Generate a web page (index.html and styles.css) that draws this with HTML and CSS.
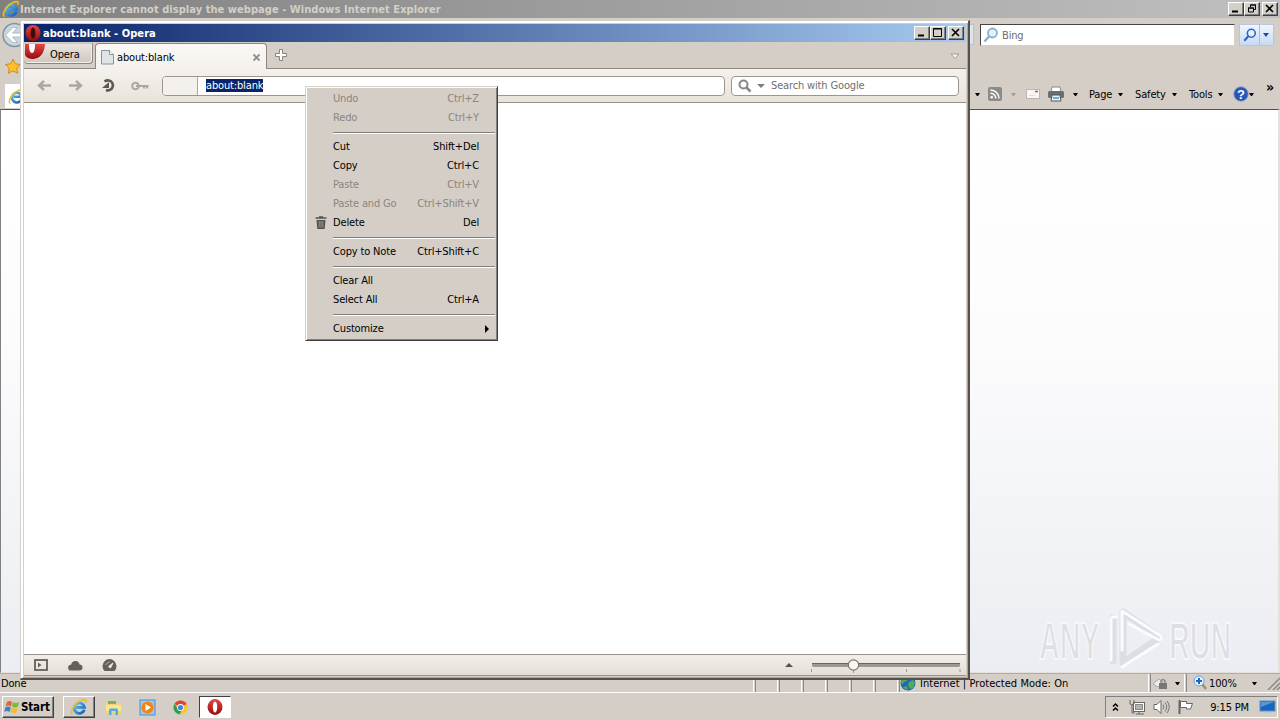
FILE: index.html
```html
<!DOCTYPE html>
<html>
<head>
	<meta charset="utf-8">
	<title>about:blank - Opera</title>
	<link rel="stylesheet" href="styles.css">
</head>
<body>
	<svg class="defs">
		<defs>
			<linearGradient id="red" x1="0" y1="0" x2="0" y2="1"><stop offset="0" stop-color="#e34848"/><stop offset="1" stop-color="#9c0808"/></linearGradient>
			<linearGradient id="blue" x1="0" y1="0" x2="1" y2="1"><stop offset="0" stop-color="#5cc4f5"/><stop offset="1" stop-color="#125fb8"/></linearGradient>
			<symbol id="ie" viewBox="0 0 18 18">
				<path d="M14.300 11.800A5.200 5.200 0 1 1 14.500 9.300H6" fill="none" stroke="url(#blue)" stroke-width="2.800"/>
				<path d="M2.500 16.500C-1 14 5 5 11 2.500C15 .8 17.500 1.500 15.800 5" fill="none" stroke="#e9bd2c" stroke-width="1.600"/>
			</symbol>
			<symbol id="opera" viewBox="0 0 16 16">
				<ellipse cx="8" cy="8" rx="7.500" ry="7.900" fill="url(#red)"/>
				<ellipse cx="8" cy="8" rx="2.200" ry="5.600" fill="#fff"/>
			</symbol>
			<symbol id="lens" viewBox="0 0 16 16">
				<circle cx="9.500" cy="6" r="4.500" fill="#e3f1fb" stroke="currentColor" stroke-width="1.800"/>
				<path d="M6 9.500L1.500 14.500" stroke="currentColor" stroke-width="2.400"/>
			</symbol>
		</defs>
	</svg>

	<div class="desktop">
		<!-- Internet Explorer -->
		<div class="ie">
			<div class="ie-title">
				<svg class="ie-logo"><use href="#ie"/></svg>
				<span class="ie-name">Internet Explorer cannot display the webpage - Windows Internet Explorer</span>
				<div class="win-btns">
					<b class="wb"><svg width="14" height="11"><path d="M3 8.500h6" stroke="#000" stroke-width="2"/></svg></b>
					<b class="wb"><svg width="14" height="11"><path d="M5.500 4V2h5v4.500H9M5 2h6M3.500 5v4h5V5zM3 5h6" fill="none" stroke="#000"/></svg></b>
					<b class="wb last"><svg width="14" height="11"><path d="M3 2l7 7M10 2l-7 7" stroke="#000" stroke-width="1.600"/></svg></b>
				</div>
			</div>
			<div class="ie-bars">
				<div class="ie-left">
					<svg width="26" height="90">
						<circle cx="14.500" cy="17" r="11.500" fill="#c9d6de" stroke="#8295a1" stroke-width="1.500"/>
						<path d="M5.500 17l7.500-7.500h4.500L12.500 15H25v4H12.500l5 5.500H13z" fill="#fff" stroke="#9fb0bc" stroke-width=".8"/>
						<path d="M13 41l2.300 4.800 5.200.7-3.800 3.600 1 5.200L13 52.800l-4.700 2.500 1-5.200-3.800-3.600 5.200-.7z" fill="#ffc02c" stroke="#d48a16"/>
						<path d="M5 90V66h21v24" fill="#fff"/>
						<use href="#ie" x="8" y="70" width="17" height="17"/>
					</svg>
				</div>
				<div class="ie-right">
					<div class="ie-search">
						<i class="stub"></i>
						<div class="bing"><svg class="i16 pale"><use href="#lens"/></svg><span>Bing</span></div>
						<div class="go"><svg class="i14 strong"><use href="#lens"/></svg><i class="div"></i><i class="dn navy"></i></div>
					</div>
					<div class="ie-cmd">
						<i class="dn"></i>
						<svg width="16" height="16"><rect x="1" y="1" width="14" height="14" rx="2" fill="#8b8b89"/><circle cx="4.700" cy="11.300" r="1.300" fill="#fff"/><path d="M3.500 7.200a5.300 5.300 0 0 1 5.300 5.300M3.500 4a8.500 8.500 0 0 1 8.500 8.500" fill="none" stroke="#fff" stroke-width="1.500"/></svg>
						<i class="dn dim"></i>
						<svg width="16" height="16"><rect x="1.500" y="3.500" width="13" height="9" fill="#faf6f5" stroke="#bdb4b0"/><path d="M10 5.500h3" stroke="#c44" stroke-width="1.500"/><path d="M4 9.500h6" stroke="#ddd"/></svg>
						<svg width="18" height="16"><path d="M5 1h8l1 5H4z" fill="#fff" stroke="#888"/><rect x="1" y="5" width="16" height="7" rx="1.500" fill="#6b6e72"/><path d="M5 9h8l1 6H4z" fill="#e8f3f8" stroke="#555"/><path d="M6 12h6" stroke="#399bc0" stroke-width="1.500"/></svg>
						<i class="dn"></i>
						<span>Page</span><i class="dn"></i>
						<span>Safety</span><i class="dn"></i>
						<span>Tools</span><i class="dn"></i>
						<svg width="16" height="16"><circle cx="8" cy="8" r="7.300" fill="#2856b8" stroke="#96a6cb"/><text class="q" x="8" y="12.500">?</text></svg>
						<i class="dn"></i>
						<span class="more">»</span>
					</div>
				</div>
			</div>
			<div class="ie-page"></div>
			<div class="ie-status">
				<span class="done">Done</span>
				<i class="cell"></i><i class="cell"></i><i class="cell"></i><i class="cell"></i><i class="cell"></i><i class="cell"></i>
				<div class="zone">
					<svg width="16" height="16"><circle cx="8" cy="8" r="7.500" fill="#2164b8"/><path d="M3 3q4-3 6 0l-2 3-3 1-2 3-1-3zM9 7l4-2 2 3-2 5-3 1-2-4zM3 12l4-1 1 4-3-1z" fill="#4fae54"/></svg>
					<span>Internet | Protected Mode: On</span>
				</div>
				<div class="lock">
					<svg width="18" height="16"><path d="M1 9l6-5 4 3-5 5z" fill="#eee" stroke="#aaa"/><rect x="7" y="8" width="8" height="6" fill="#777"/><path d="M9 8V6q2-3 4 0v2" fill="none" stroke="#888" stroke-width="1.500"/></svg>
					<i class="dn"></i>
				</div>
				<div class="zoom">
					<svg width="14" height="16"><path d="M9 9l4 5" stroke="#a58a6c" stroke-width="2.500"/><circle cx="6" cy="6" r="5" fill="#e1f1ff" stroke="#68a4dd"/><path d="M6 3v6M3 6h6" stroke="#2366c0" stroke-width="2"/></svg>
					<span>100%</span><i class="dn"></i>
					<svg class="grip" width="13" height="13"><path d="M1 13L13 1M6 13L13 6M10 13l3-3" stroke="#888" stroke-width="1.500"/></svg>
				</div>
			</div>
		</div>

		<svg class="watermark" width="210" height="68">
			<g class="wm-text">
				<text transform="translate(3 53) scale(.565 1)">ANY</text>
				<text transform="translate(133 53) scale(.565 1)">RUN</text>
			</g>
			<path d="M77 12v43M87 6l37 25.500L87 57zM87 6v43" fill="none" stroke="#dcdee3" stroke-width="7" stroke-linejoin="round" stroke-linecap="round"/>
			<path d="M75 54V14q0-4 5-3M86 44V5l39 25q2 4-2 4L93 18M86 61l36-23" fill="none" stroke="#fafbfd" stroke-width="3" stroke-linecap="round" stroke-linejoin="round"/>
		</svg>

		<!-- Opera -->
		<div class="opera">
			<div class="op-title">
				<svg class="i16"><ellipse cx="8" cy="8" rx="7.500" ry="8" fill="url(#red)"/><ellipse cx="8" cy="8" rx="2.400" ry="5.600" fill="#3c0c14"/></svg>
				<span>about:blank - Opera</span>
				<div class="win-btns">
					<b class="wb"><svg width="14" height="11"><path d="M3 8.500h6" stroke="#000" stroke-width="2"/></svg></b>
					<b class="wb"><svg width="14" height="11"><path d="M2.500 1.500h8v8h-8zM2 2h9" fill="none" stroke="#000"/></svg></b>
					<b class="wb last"><svg width="14" height="11"><path d="M3 2l7 7M10 2l-7 7" stroke="#000" stroke-width="1.600"/></svg></b>
				</div>
			</div>
			<div class="op-tabs">
				<div class="op-menu">
					<svg width="22" height="17"><path d="M1 0h20q-1 14-12 15Q3 15 1 11z" fill="url(#red)"/><path d="M5 0h6q0 9-3 9T5 0z" fill="#fff"/></svg>
					<span>Opera</span>
				</div>
				<div class="op-tab">
					<svg width="13" height="15"><path d="M.5.500h8l4 4v9.500H.5z" fill="#dfe4e8" stroke="#899299"/><path d="M8.500.500v4h4" fill="#fff" stroke="#899299"/></svg>
					<span>about:blank</span>
					<svg width="9" height="9"><path d="M1.500 1.500l6 6M7.500 1.500l-6 6" stroke="#938f8b" stroke-width="1.800"/></svg>
				</div>
				<svg class="plus" width="14" height="14"><path d="M5.500 1.500h3v4h4v3h-4v4h-3v-4h-4v-3h4z" fill="#fff" stroke="#898580"/></svg>
				<svg class="closed" width="11" height="7"><path d="M1 1h8L5 5.500z" fill="#f6f3ef" stroke="#a39e98"/></svg>
			</div>
			<div class="op-bar">
				<svg width="15" height="13"><path d="M14 6.500H3M7 2L2 6.500 7 11" fill="none" stroke="#aca7a1" stroke-width="2.400"/></svg>
				<svg width="15" height="13"><path d="M1 6.500h11M8 2l5 4.500L8 11" fill="none" stroke="#aca7a1" stroke-width="2.400"/></svg>
				<svg width="15" height="15"><path d="M3.500 3.500Q5.500 2 8 2.500A5 5 0 1 1 5 12" fill="none" stroke="#5d5954" stroke-width="2.600"/><path d="M1 10h7V4z" fill="#5d5954"/></svg>
				<svg width="18" height="10"><circle cx="4.500" cy="5" r="3.300" fill="none" stroke="#aca7a1" stroke-width="2"/><path d="M5 5h12.500M13 5v2.500M16 5v2.500" stroke="#aca7a1" stroke-width="2"/></svg>
				<div class="address"><i></i><span>about:blank</span></div>
				<div class="google">
					<svg width="14" height="14"><circle cx="5.500" cy="5.500" r="4" fill="none" stroke="#878787" stroke-width="2"/><path d="M8.500 8.500l4 4" stroke="#878787" stroke-width="2.500"/></svg>
					<i class="dn gray"></i>
					<span>Search with Google</span>
				</div>
			</div>
			<div class="op-page"></div>
			<div class="op-status">
				<svg width="14" height="12"><rect x="1" y="1" width="12" height="10" fill="none" stroke="#65605b" stroke-width="1.800"/><path d="M4 3.500L7.500 6 4 8.500z" fill="#65605b"/></svg>
				<svg width="15" height="11"><path d="M3 10.500a2.700 2.700 0 0 1 0-5.700Q4 1 7.500 1T11.500 4.500q3 0 3 3t-3 3z" fill="#65605b"/></svg>
				<svg width="15" height="13"><path d="M2.500 12A7 7 0 1 1 12.500 12z" fill="#65605b"/><path d="M6.500 7.500L11 4 8.500 9z" fill="#eee8e1" stroke="#eee8e1"/><path d="M3.500 6q2-3 4-3" fill="none" stroke="#b8b2ac"/></svg>
				<i class="up"></i>
				<svg class="slider" width="152" height="18">
					<rect x="2" y="6" width="148" height="4" rx="1.500" fill="#9d9892"/>
					<path d="M2 6.500h148" stroke="#6b6660"/>
					<path d="M1.500 12v3M43.500 12v4M96.500 12v3M150 12v3" stroke="#9d9892"/>
					<circle cx="43.500" cy="8" r="5.200" fill="#faf8f5" stroke="#7b7670" stroke-width="1.200"/>
				</svg>
			</div>
		</div>

		<div class="menu">
			<div class="item off"><span>Undo</span><span>Ctrl+Z</span></div>
			<div class="item off"><span>Redo</span><span>Ctrl+Y</span></div>
			<div class="sep"></div>
			<div class="item"><span>Cut</span><span>Shift+Del</span></div>
			<div class="item"><span>Copy</span><span>Ctrl+C</span></div>
			<div class="item off"><span>Paste</span><span>Ctrl+V</span></div>
			<div class="item off"><span>Paste and Go</span><span>Ctrl+Shift+V</span></div>
			<div class="item has-icon">
				<svg width="12" height="13"><path d="M.5 2h11M4 1h4" stroke="#55514d" stroke-width="1.500"/><path d="M1.500 4h9l-.8 9H2.300z" fill="#55514d"/><path d="M4.200 5v6.500M6 5v6.500M7.800 5v6.500" stroke="#a8a39e" stroke-width=".8"/></svg>
				<span>Delete</span><span>Del</span>
			</div>
			<div class="sep"></div>
			<div class="item"><span>Copy to Note</span><span>Ctrl+Shift+C</span></div>
			<div class="sep"></div>
			<div class="item"><span>Clear All</span></div>
			<div class="item"><span>Select All</span><span>Ctrl+A</span></div>
			<div class="sep"></div>
			<div class="item sub"><span>Customize</span><i></i></div>
		</div>

		<div class="taskbar">
			<div class="start">
				<svg width="17" height="16"><path d="M3 3q3-2 5 0L7 7.500q-3-2-5.500 0z" fill="#e3642e"/><path d="M9 3q3 2 6 0l-1 4.500q-3 2-6 0z" fill="#79b943"/><path d="M1.300 8.500q3-2 5.400 0l-1 4.500Q3 11 .3 13z" fill="#3684ca"/><path d="M7.700 8.500q3 2 6 0l-1 4.500q-3 2-6 0z" fill="#f3bd2b"/></svg>
				<span>Start</span>
			</div>
			<div class="task"><svg class="i18"><use href="#ie"/></svg></div>
			<svg class="quick" width="17" height="17"><path d="M1 3h5l1 1.500h9V14H1z" fill="#efd573"/><path d="M3 2h8v3H3z" fill="#7cb356"/><path d="M1 6h15v6H1z" fill="#f9e69c"/><path d="M4 16v-5q0-1.500 1.500-1.500h6Q13 9.500 13 11v5h-2.500v-4h-4v4z" fill="#54acdb"/></svg>
			<svg class="quick" width="17" height="17"><rect x="1" y="1" width="15" height="15" fill="#9dc8eb" stroke="#4f8fc4"/><circle cx="8.500" cy="8.500" r="6" fill="#f28413"/><path d="M6.500 5l5.500 3.500-5.500 3.500z" fill="#fff"/></svg>
			<svg class="quick" width="15" height="15"><circle cx="7.500" cy="7.500" r="7" fill="#f5c926"/><path d="M7.500 7.500L1.440 4A7 7 0 0 1 13.560 4z" fill="#dc4437"/><path d="M1.440 4A7 7 0 0 0 6.500 14.400L9.500 9 7.500 7.500 4 7.500z" fill="#2b9d58"/><circle cx="7.500" cy="7.500" r="3.400" fill="#fff"/><circle cx="7.500" cy="7.500" r="2.600" fill="#4385ef"/></svg>
			<div class="task active"><svg class="i16"><use href="#opera"/></svg></div>
			<div class="tray">
				<svg class="t1" width="7" height="10"><path d="M1 4.500l2.500-2.500L6 4.500M1 8.500L3.500 6 6 8.500" fill="none" stroke="#000" stroke-width="1.500"/></svg>
				<svg class="t2" width="16" height="16"><rect x="4.500" y="3.500" width="11" height="9" fill="#fff" stroke="#666"/><rect x="6.500" y="5.500" width="7" height="5" fill="#b6b3ae" stroke="#888"/><path d="M7 15h8M10 13v2" stroke="#666"/><path d="M1 1v4q1 1.500 4 0V1M3 6v8h3" fill="none" stroke="#666"/></svg>
				<svg class="t3" width="17" height="16"><path d="M1 5.500h3l4-4v13l-4-4H1z" fill="#fff" stroke="#666"/><path d="M10 5.500q2 2.500 0 5M12 3.500q3.500 4.500 0 9M14 2q4.500 6 0 12" fill="none" stroke="#777"/></svg>
				<svg class="t4" width="16" height="16"><path d="M1.500 1v14" stroke="#666" stroke-width="2"/><path d="M2.500 2.500h6v2h6L12.500 10H8.500V8.500h-6z" fill="#fff" stroke="#666"/></svg>
				<span>9:15 PM</span>
				<svg width="17" height="14"><rect x="1" y="1" width="15" height="10" fill="#1766bd" stroke="#6792bd"/><path d="M2 2h13L2 7z" fill="#5597dc"/><path d="M4 12.500h9" stroke="#b9cbdc"/></svg>
			</div>
		</div>
	</div>
</body>
</html>
```
FILE: styles.css
```css
*{margin: 0;padding: 0;box-sizing: border-box;}
body{
	width: 1280px;height: 720px;
	overflow: hidden;
	font: 11px "DejaVu Sans Condensed","DejaVu Sans",sans-serif;
	font-stretch: condensed;
	letter-spacing: -0.15px;
	color: #000;
	background: #d5cec6;
}
svg{display: block;flex: none;}
span{white-space: nowrap;}
.defs{position: absolute;width: 0;height: 0;}
.desktop{
	position: relative;
	width: 1280px;height: 720px;
	display: flex;
	flex-direction: column;
}
.i14{width: 14px;height: 14px;}
.i16{width: 16px;height: 16px;}
.i18{width: 18px;height: 18px;}
.dn{
	width: 5px;height: 3px;
	border: solid transparent;
	border-width: 3px 2.5px 0;
	border-top-color: #000;
	flex: none;
}
.dn.dim{border-top-color: #a39c94;}
.dn.navy{border-width: 4px 3px 0;width: 6px;height: 4px;border-top-color: #164fa3;}
.dn.gray{border-width: 4px 4px 0;width: 8px;height: 4px;border-top-color: #7d7d7d;}

/* window buttons */
.win-btns{display: flex;margin-left: auto;}
.wb{
	width: 16px;height: 14px;
	background: #d4d0c8;
	border: 1px solid #fff;
	border-right-color: #404040;
	border-bottom-color: #404040;
	box-shadow: inset -1px -1px #808080;
}
.wb.last{margin-left: 2px;}

/* Internet Explorer */
.ie{height: 693px;display: flex;flex-direction: column;}
.ie-title{
	height: 18px;
	display: flex;
	align-items: center;
	padding: 0 2px;
	background: linear-gradient(90deg,#808080,#c0c0c0);
	color: #d4d0c8;
	font-weight: bold;
	letter-spacing: 0.05px;
}
.ie-logo{width: 18px;height: 18px;}
.ie-bars{height: 91px;display: flex;justify-content: space-between;background: #d5cec6;}
.ie-right{width: 310px;}
.ie-search{height: 34px;padding-top: 6px;display: flex;}
.stub{width: 4px;height: 21px;border: 1px solid #b5c4d3;background: #dfe5ec;border-left: 0;}
.bing{
	width: 255px;height: 22px;
	margin-left: 6px;
	display: flex;
	align-items: center;
	gap: 3px;
	padding-left: 2px;
	background: #fff;
	border: 1px solid #d4d0c8;
	border-top-color: #444;
	border-left-color: #444;
	color: #6d6d6d;
}
.pale{color: #8db1cc;}
.strong{color: #2563c4;}
.go{
	width: 35px;height: 22px;
	margin-left: 4px;
	display: flex;
	align-items: center;
	padding-left: 3px;
	background: linear-gradient(#f0f6fe,#c6daf4);
	border: 1px solid #b6c7dd;
}
.go .div{width: 1px;height: 20px;margin: 0 3px 0 2px;background: #a9bfdb;}
.ie-cmd{
	height: 32px;
	margin-top: 26px;
	display: grid;
	grid-template-columns: 12px 24px 14px 22px 26px 16px 29px 17px 37px 17px 29px 15px 16px 17px 12px;
	align-items: center;
	padding-left: 5px;
}
.q{font: bold 13px "Liberation Sans",sans-serif;fill: #fff;text-anchor: middle;}
.more{font-size: 14px;font-weight: bold;margin-top: -14px;}
.ie-page{
	flex: 1;
	border: solid #808080;
	border-width: 1px 2px 1px 1px;
	border-top-color: #55524e;
	border-right-color: #e4e1dc;
	border-bottom-color: #e4e1dc;
	background: linear-gradient(#fff 0,#fcfcfd 40%,#ebedf2 100%);
}
.ie-status{
	height: 20px;
	display: flex;
	border-bottom: 1px solid #fff;
	background: #d5cec6;
	border-top: 1px solid #b1aca5;
}
.ie-status>*{border-right: 1px solid #fff;border-left: 1px solid #8e8982;display: flex;align-items: center;margin-right: 1px;}
.ie-status .done{width: 754px;padding-left: 1px;border-left: 0;}
.cell{width: 23px;}
.zone{width: 250px;gap: 4px;letter-spacing: 0.05px;}
.lock{width: 35px;gap: 5px;padding-left: 1px;}
.zoom{flex: 1;padding-left: 6px;gap: 2px;}
.ie-status .zoom{border-right: 0;margin-right: 0;}
.zoom .dn{margin-left: 13px;}
.grip{margin-left: auto;}

/* watermark over the page */
.watermark{position: absolute;left: 1036px;top: 606px;}
.wm-text{
	font: bold 51px "Liberation Sans",sans-serif;
	letter-spacing: 0;
	fill: #dddfe4;
	stroke: #f9fafc;
	stroke-width: 1.6;
}

/* Opera window */
.opera{
	position: absolute;left: 20px;top: 20px;
	width: 950px;height: 660px;
	display: flex;
	flex-direction: column;
	padding: 2px 2px 1px 3px;
	background: #d5cec6;
	border: 1px solid #d4d0c8;
	border-right: 2px solid #55524e;
	border-bottom: 2px solid #55524e;
	box-shadow: inset 2px 2px #fff,inset -1px -1px #aaa49c;
}
.op-title{
	height: 18px;
	margin-top: 1px;
	display: flex;
	align-items: center;
	gap: 2px;
	padding: 0 2px 0 1px;
	background: linear-gradient(90deg,#0a246a,#a6caf0);
	color: #fff;
	font-weight: bold;
	letter-spacing: 0.05px;
}
.op-tabs{height: 27px;display: flex;padding-top: 1px;border-bottom: 1px solid #8c8781;}
.op-menu{
	width: 69px;height: 21px;
	display: flex;
	gap: 4px;
	background: linear-gradient(#e9e4de,#cec7bf);
	border: 1px solid #8c8781;
	border-top-color: #cbc5be;
	border-left: 0;
	border-radius: 0 0 4px 4px;
	box-shadow: inset -1px -1px #f2eeea;
}
.op-menu span{margin-top: 4px;}
.op-tab{
	width: 172px;height: 26px;
	margin-left: 2px;
	display: flex;
	align-items: center;
	gap: 3px;
	padding: 1px 5px 0 5px;
	background: linear-gradient(#faf8f5,#f5f1ec);
	border: 1px solid #8c8781;
	border-bottom: 0;
	border-radius: 4px 4px 0 0;
}
.op-tab svg:last-child{margin-left: auto;}
.plus{margin: 5px 0 0 7px;}
.closed{margin: 10px 5px 0 auto;}
.op-bar{
	height: 34px;
	display: flex;
	align-items: center;
	padding: 0 7px 0 13px;
	background: linear-gradient(#f5f1ec,#e9e3dc);
	border-bottom: 1px solid #98928b;
}
.op-bar>svg{margin-right: 16px;}
.op-bar>svg:nth-child(2){margin-right: 18px;}
.op-bar>svg:nth-child(3){margin-right: 15px;}
.op-bar>svg:nth-child(4){margin-right: 13px;}
.address,.google{
	height: 20px;
	display: flex;
	align-items: center;
	background: #fff;
	border: 1px solid #9c968f;
	border-radius: 4px;
}
.address{flex: 1;}
.address i{width: 35px;height: 18px;border-right: 1px solid #aaa49d;background: #f4f1ed;border-radius: 3px 0 0 3px;margin-right: 8px;}
.address span{background: #0a246a;color: #fff;line-height: 13px;}
.google{width: 228px;margin-left: 6px;padding-left: 6px;gap: 5px;color: #6f6f6f;}
.google span{margin-left: 1px;}
.op-page{flex: 1;background: #fff;}
.op-status{
	height: 22px;
	display: flex;
	align-items: center;
	padding: 0 4px 0 10px;
	gap: 20px;
	background: linear-gradient(#f2eee9,#e4ded6);
	border-top: 1px solid #98928b;
	border-bottom: 1px solid #98928b;
	margin-bottom: 1px;
}
.op-status>svg:nth-child(3){margin-left: -1px;}
.up{margin-left: auto;border: solid transparent;border-width: 0 4px 4px;border-bottom-color: #57524d;}
.slider{margin: 2px 0 0 -3px;}

/* context menu */
.menu{
	position: absolute;left: 305px;top: 86px;
	width: 193px;height: 255px;
	padding: 2px;
	background: #d5cec6;
	border: 1px solid #d4d0c8;
	border-right-color: #404040;
	border-bottom-color: #404040;
	box-shadow: inset 1px 1px #fff,inset -1px -1px #808080;
}
.item{height: 19px;display: flex;justify-content: space-between;align-items: center;padding: 0 16px 0 25px;}
.item.off{color: #8a857f;}
.has-icon{padding-left: 7px;}
.has-icon svg{margin-right: 6px;}
.has-icon span:last-child{margin-left: auto;}
.sep{height: 2px;margin: 5px 0 3px 25px;border-top: 1px solid #808080;border-bottom: 1px solid #fff;}
.sub{padding-right: 6px;}
.sub i{border: solid transparent;border-width: 4px 0 4px 4px;border-left-color: #000;}

/* taskbar */
.taskbar{
	height: 27px;
	display: flex;
	align-items: center;
	padding: 1px 2px 0 2px;
	background: #d5cec6;
}
.start,.task{
	height: 22px;
	display: flex;
	align-items: center;
	border: 1px solid #fff;
	border-right-color: #404040;
	border-bottom-color: #404040;
	box-shadow: inset -1px -1px #808080;
}
.start{width: 52px;padding-left: 1px;font-size: 11.5px;font-weight: bold;}
.task{width: 32px;justify-content: center;margin-left: 9px;}
.quick{margin-left: 17px;}
.task.active{
	margin-left: 11px;
	background: #fff;
	border-color: #404040 #fff #fff #404040;
	box-shadow: none;
}
.quick:nth-child(3){margin-left: 10px;}
.tray{
	width: 173px;height: 22px;
	margin-left: auto;
	display: flex;
	align-items: center;
	border: 1px solid #808080;
	border-right-color: #fff;
	border-bottom-color: #fff;
	padding: 0 1px 0 6px;
}
.t2{margin-left: 10px;}
.t3,.t4{margin-left: 8px;}
.tray span{margin-left: auto;margin-right: 10px;}
```
